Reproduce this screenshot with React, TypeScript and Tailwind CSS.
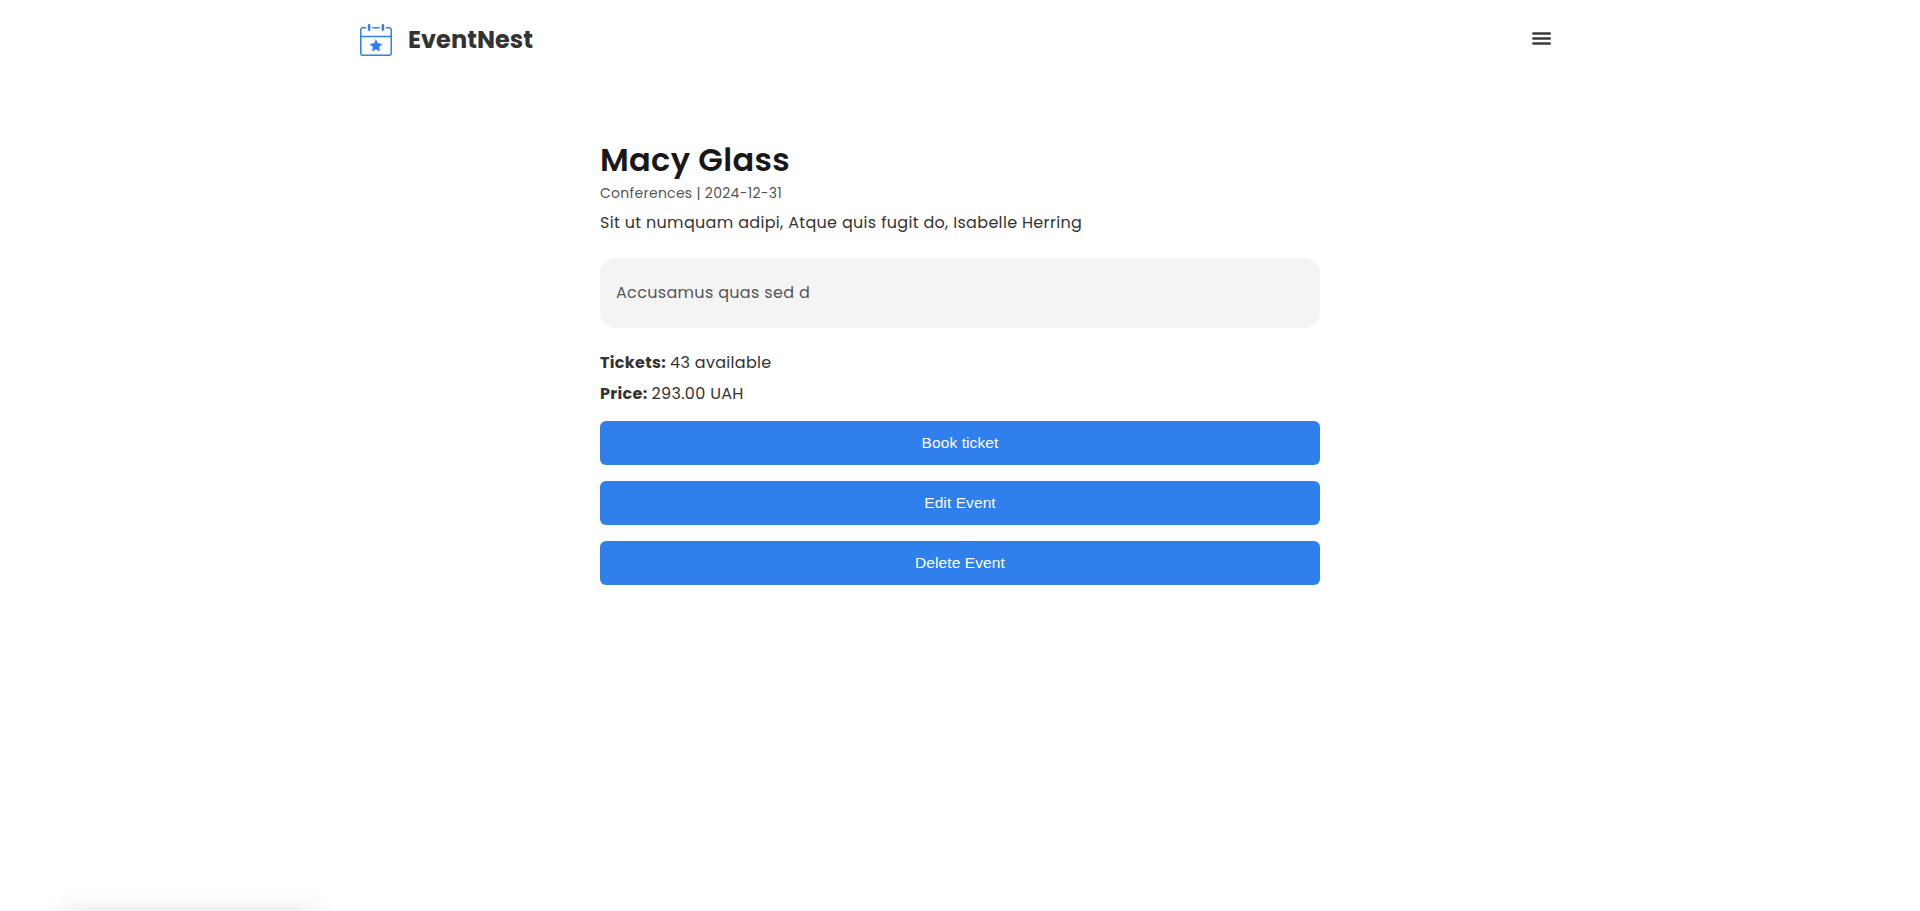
function Logo() {
  return (
    <svg width="32" height="32" viewBox="0 0 32 32" fill="none" stroke="#2f80ed" strokeLinecap="round" strokeLinejoin="round">
      <path d="M5.6 3.7H2.6A2 2 0 0 0 .75 5.7V29.4A1.9 1.9 0 0 0 2.6 31.25H29.4A1.9 1.9 0 0 0 31.25 29.4V5.7A2 2 0 0 0 29.4 3.7H26.4M12.9 3.7H19.1" strokeWidth="1.5" />
      <path d="M.8 12.4H31.2" strokeWidth="1.5" />
      <path d="M9.1 1.4V5.6M22.9 1.4V5.6" strokeWidth="2.6" />
      <path
        d="M16 15.9L17.75 19.6L21.8 20.15L18.85 22.95L19.55 27L16 25.05L12.45 27L13.15 22.95L10.2 20.15L14.25 19.6Z"
        fill="#2f80ed"
        strokeWidth="0.6"
      />
    </svg>
  );
}

function MenuIcon() {
  return (
    <svg width="24" height="24" viewBox="0 0 24 24" stroke="#3d3a3d" strokeWidth="2.35" strokeLinecap="round">
      <path d="M4.3 6.5H20.8M4.3 11.5H20.8M4.3 16.5H20.8" />
    </svg>
  );
}

const actions = ["Book ticket", "Edit Event", "Delete Event"];

export default function App() {
  return (
    <div className="min-h-[911px] overflow-hidden bg-white font-['Poppins','Inter',sans-serif] tracking-[0.32px] text-[#333333]">
      <header className="mx-auto flex h-20 w-[1200px] items-center justify-between">
        <a className="flex items-center gap-4">
          <Logo />
          <span className="text-2xl leading-[30px] font-bold tracking-[0.04px]">EventNest</span>
        </a>
        <button type="button" aria-label="Menu" className="mr-[7px] mb-[2px]">
          <MenuIcon />
        </button>
      </header>

      <main className="mx-auto w-[720px] pt-[60px]">
        <h1 className="text-[32px] leading-10 font-semibold text-[#181818]">Macy Glass</h1>
        <p className="mt-[3px] text-sm leading-5 tracking-[0.28px] text-[#555555]">Conferences | 2024-12-31</p>
        <p className="mt-2 text-base leading-6">Sit ut numquam adipi, Atque quis fugit do, Isabelle Herring</p>

        <div className="mt-[23px] rounded-2xl bg-[#f4f4f4] px-4 py-[23px] text-base leading-6 text-[#555555]">
          Accusamus quas sed d
        </div>

        <p className="mt-[23px] text-base leading-6">
          <strong className="mr-[-0.7px] font-bold">Tickets:</strong> 43 available
        </p>
        <p className="mt-[7px] text-base leading-6">
          <strong className="mr-[-0.7px] font-bold">Price:</strong> 293.00 UAH
        </p>

        <div className="mt-[15px] flex flex-col gap-4">
          {actions.map((label) => (
            <button
              key={label}
              type="button"
              className="h-11 rounded-md bg-[#2f80ed] font-['Liberation_Sans',Arial,sans-serif] text-[15.5px] leading-[18px] tracking-[0.09px] text-white"
            >
              {label}
            </button>
          ))}
        </div>
      </main>

      <div className="fixed top-[914px] left-[60px] h-10 w-[258px] rounded-lg shadow-[0_0_28px_rgba(0,0,0,0.15)]" />
    </div>
  );
}
